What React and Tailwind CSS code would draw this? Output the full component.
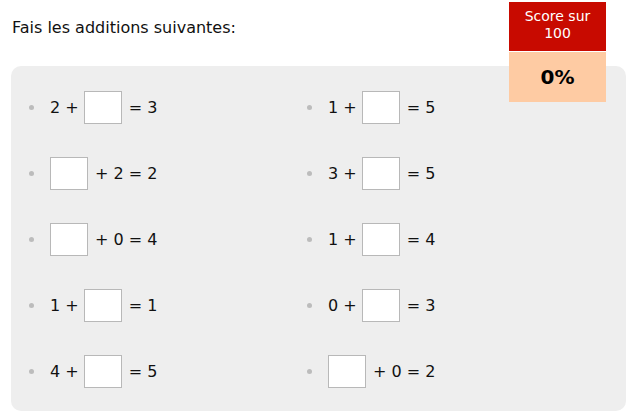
import React from 'react';

const rows = [
  [['2 +', null, '= 3'], ['1 +', null, '= 5']],
  [[null, null, '+ 2 = 2'], ['3 +', null, '= 5']],
  [[null, null, '+ 0 = 4'], ['1 +', null, '= 4']],
  [['1 +', null, '= 1'], ['0 +', null, '= 3']],
  [['4 +', null, '= 5'], [null, null, '+ 0 = 2']],
];

function Item({ before, after }) {
  return (
    <div className="flex items-center h-[33px]">
      <span className="w-[5px] h-[5px] rounded-full bg-[#bcbcbc]"></span>
      <div className="flex items-center ml-[16px]">
        {before && <span className="mr-[5px]">{before}</span>}
        <span className="w-[38px] h-[33px] bg-white border border-[#b8b8b8]"></span>
        <span className="ml-[7px]">{after}</span>
      </div>
    </div>
  );
}

export default function App() {
  return (
    <div className="relative w-[635px] h-[419px] bg-white text-[#111] text-[16px]" style={{ fontFamily: '"DejaVu Sans", Verdana, sans-serif' }}>
      <div className="pl-[12px] pt-[18px] h-[66px] leading-[20px]">Fais les additions suivantes:</div>

      <div className="ml-[11px] w-[615px] rounded-[10px] bg-[#eeeeee] pl-[18px] pt-[25px] pb-[23px]">
        <div className="flex flex-col gap-[33px]">
          {rows.map((r, i) => (
            <div key={i} className="grid grid-cols-[278px_1fr]">
              <Item before={r[0][0]} after={r[0][2]} />
              <Item before={r[1][0]} after={r[1][2]} />
            </div>
          ))}
        </div>
      </div>

      <div className="absolute top-[2px] left-[509px] w-[97px]">
        <div className="h-[49px] bg-[#c80a00] text-white text-[14px] leading-[17px] text-center pt-[6px]">
          Score sur<br />100
        </div>
        <div className="mt-[1px] h-[50px] bg-[#fecba3] flex items-center justify-center text-[20px] font-bold text-black">
          0%
        </div>
      </div>
    </div>
  );
}
